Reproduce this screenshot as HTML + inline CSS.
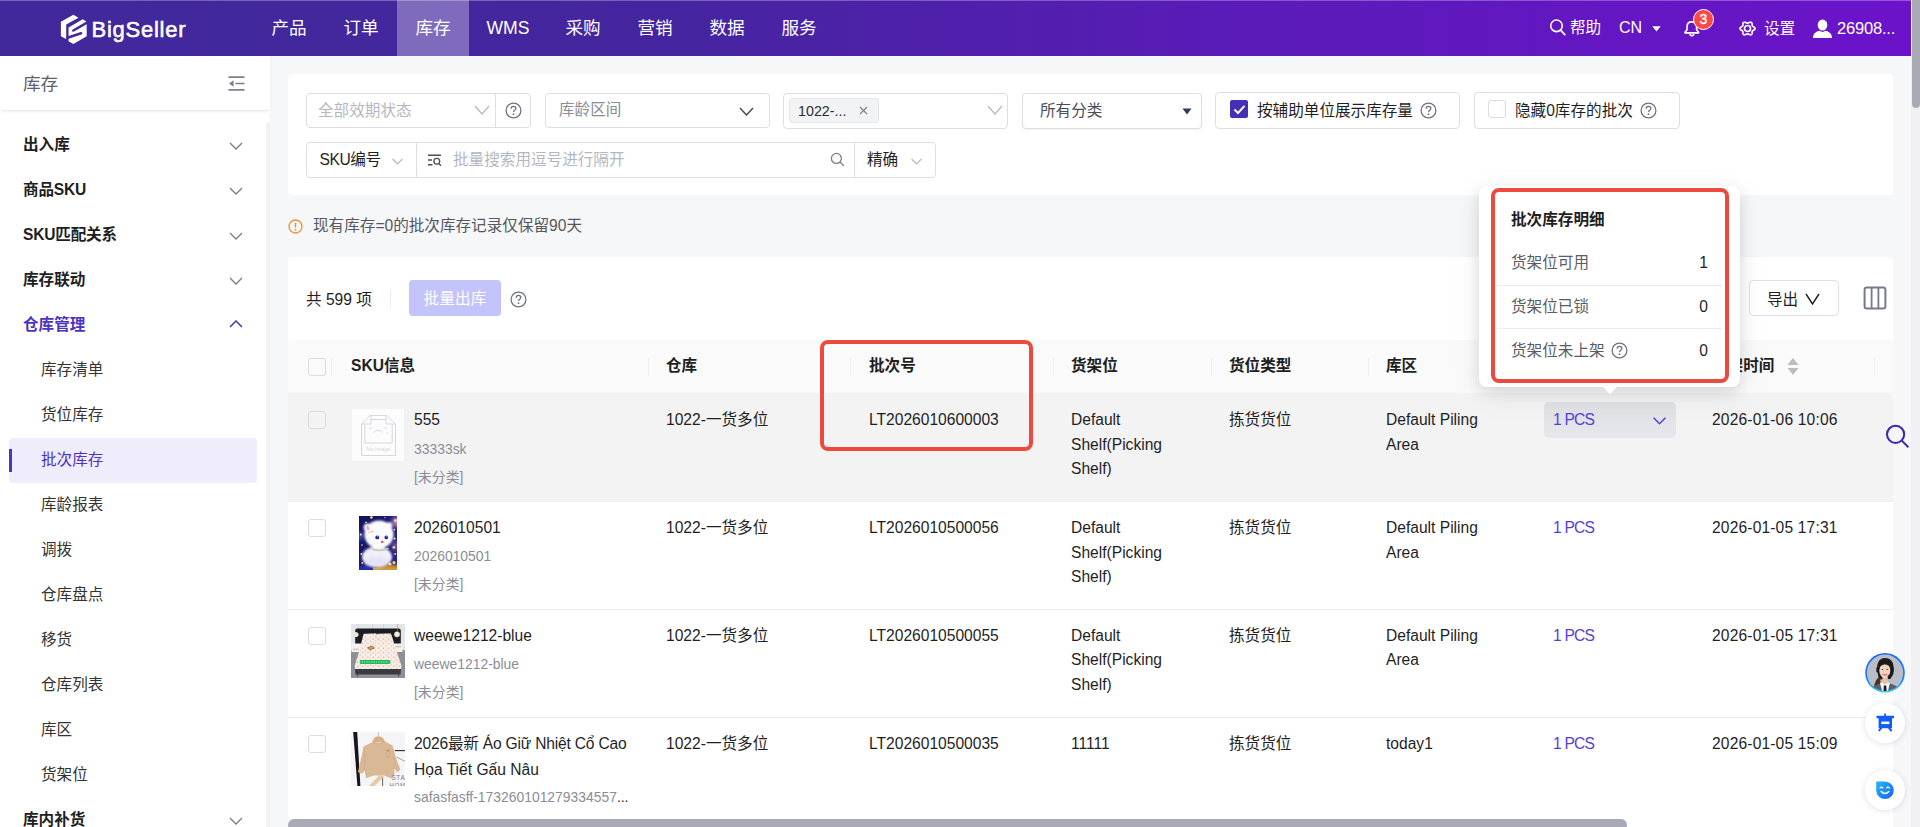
<!DOCTYPE html>
<html lang="zh-CN">
<head>
<meta charset="utf-8">
<title>批次库存 - BigSeller</title>
<style>
*{box-sizing:border-box;margin:0;padding:0}
html,body{width:1920px;height:827px;overflow:hidden;background:#f6f7f9}
body{font-family:"Liberation Sans","Noto Sans CJK SC",sans-serif;font-size:15.6px;color:#1f1f1f;position:relative}
.abs{position:absolute}
.t{position:absolute;white-space:nowrap;line-height:22px;font-size:15.6px}
svg{display:block}
/* header */
#hdr{position:absolute;left:0;top:0;width:1911px;height:56px;background:linear-gradient(90deg,#40299b 0%,#45259f 35%,#5a1bb8 65%,#6b13ca 100%);box-shadow:inset 0 1px 0 rgba(255,255,255,.28)}
#hdr .nav{position:absolute;top:0;height:56px;line-height:57px;font-size:17.6px;color:#fff;text-align:center;white-space:nowrap}
#hdr .nav.on{background:rgba(255,255,255,.32)}
#hdr .r{position:absolute;color:#fff;font-size:15.6px;line-height:20px;white-space:nowrap}
/* sidebar */
#side{position:absolute;left:0;top:56px;width:270px;height:771px;background:#fff}
#side .head{position:absolute;left:0;top:0;width:270px;height:55px;background:#fff;border-bottom:1px solid #ececf0;border-radius:0 0 4px 4px;box-shadow:0 1px 3px rgba(0,0,0,.06)}
#side .m{position:absolute;left:23px;font-weight:bold;font-size:15.6px;line-height:20px;color:#1f1f1f;white-space:nowrap}
#side .s{position:absolute;left:41px;font-size:15.6px;line-height:20px;color:#333;white-space:nowrap}
#side .chev{position:absolute;left:229px;width:14px;height:8px}
/* cards */
.card{position:absolute;background:#fff;border-radius:4px}
.box{position:absolute;border:1px solid #dcdee3;border-radius:4px;background:#fff;height:35px}
.ph{color:#b4b7bf}
.th{position:absolute;top:356px;font-weight:bold;font-size:15.6px;line-height:20px;white-space:nowrap;color:#1f1f1f}
.cb{position:absolute;width:18px;height:18px;border:1px solid #d9dce5;border-radius:3px;background:transparent}
.td{position:absolute;font-size:15.6px;line-height:24.6px;color:#1f1f1f;white-space:nowrap}
.sub{position:absolute;font-size:13.9px;line-height:20px;color:#8a8d96;white-space:nowrap}
.lnk{color:#5540d6;font-size:15.6px;letter-spacing:-.8px}
.sep{position:absolute;width:1px;height:18px;top:358px;background:#efeff2}
</style>
</head>
<body>

<!-- ================= HEADER ================= -->
<div id="hdr">
  <svg class="abs" style="left:60px;top:14px" width="28" height="32" viewBox="0 0 28 32">
    <g transform="translate(0.5,0.8) scale(0.078125) translate(-135,-125)">
      <path d="M300 125 L365 162 L208 250 L208 436 L140 400 L140 215 Z" fill="#fff"/>
      <path d="M420 182 L470 213 L470 400 L300 500 L238 464 L238 288 Z" fill="#fff"/>
      <path d="M480 222 L300 326" stroke="#41299b" stroke-width="33" stroke-linecap="round" fill="none"/>
      <path d="M225 418 L398 362" stroke="#41299b" stroke-width="33" stroke-linecap="round" fill="none"/>
    </g>
  </svg>
  <div class="abs" style="left:91.5px;top:13px;font-size:22px;line-height:34px;color:#fff;letter-spacing:.75px;white-space:nowrap;-webkit-text-stroke:.55px #fff">BigSeller</div>

  <div class="nav" style="left:253px;width:72px">产品</div>
  <div class="nav" style="left:325px;width:72px">订单</div>
  <div class="nav on" style="left:397px;width:72px">库存</div>
  <div class="nav" style="left:469px;width:78px">WMS</div>
  <div class="nav" style="left:547px;width:72px">采购</div>
  <div class="nav" style="left:619px;width:72px">营销</div>
  <div class="nav" style="left:691px;width:72px">数据</div>
  <div class="nav" style="left:763px;width:72px">服务</div>

  <svg class="abs" style="left:1549px;top:18px" width="17" height="18" viewBox="0 0 17 18"><circle cx="7.5" cy="7.8" r="5.8" fill="none" stroke="#fff" stroke-width="1.6"/><path d="M11.8 12.3 L15.8 16.6" stroke="#fff" stroke-width="1.7" stroke-linecap="round"/></svg>
  <div class="r" style="left:1570px;top:17.5px">帮助</div>
  <div class="r" style="left:1619px;top:18px;font-size:16px">CN</div>
  <svg class="abs" style="left:1652px;top:25.8px" width="9" height="6" viewBox="0 0 9 6"><path d="M0.3 0.3 H8.7 L4.5 5.6 Z" fill="#fff"/></svg>
  <svg class="abs" style="left:1683px;top:20px" width="18" height="18" viewBox="0 0 18 18"><path d="M8.8 1.9 C5.6 1.9 4 4.2 4 7 V9.8 L2 12.2 V12.9 H15.6 V12.2 L13.6 9.8 V7 C13.6 4.2 12 1.9 8.8 1.9 Z" fill="none" stroke="#fff" stroke-width="1.6" stroke-linejoin="round"/><path d="M6.9 14.6 Q8.8 17 10.7 14.6" fill="none" stroke="#fff" stroke-width="1.6" stroke-linecap="round"/></svg>
  <div class="abs" style="left:1693px;top:9px;width:21px;height:21px;border-radius:11px;background:#fa4a45;border:1px solid #fff;color:#fff;font-size:14px;line-height:19px;text-align:center;-webkit-text-stroke:.35px #fff">3</div>
  <svg class="abs" style="left:1739px;top:20.2px" width="17" height="17" viewBox="0 0 17 17"><path d="M8.50 3.24 L8.87 3.18 L9.27 3.02 L9.71 2.80 L10.20 2.55 L10.72 2.35 L11.26 2.23 L11.79 2.24 L12.25 2.39 L12.63 2.69 L12.90 3.11 L13.06 3.61 L13.13 4.15 L13.15 4.67 L13.16 5.14 L13.22 5.54 L13.35 5.87 L13.59 6.14 L13.93 6.39 L14.36 6.63 L14.83 6.91 L15.28 7.23 L15.66 7.61 L15.91 8.04 L16.00 8.50 L15.91 8.96 L15.66 9.39 L15.28 9.77 L14.83 10.09 L14.36 10.37 L13.93 10.61 L13.59 10.86 L13.35 11.13 L13.22 11.46 L13.16 11.86 L13.15 12.33 L13.13 12.85 L13.06 13.39 L12.90 13.89 L12.63 14.31 L12.25 14.61 L11.79 14.76 L11.26 14.77 L10.72 14.65 L10.20 14.45 L9.71 14.20 L9.27 13.98 L8.87 13.82 L8.50 13.76 L8.13 13.82 L7.73 13.98 L7.29 14.20 L6.80 14.45 L6.28 14.65 L5.74 14.77 L5.21 14.76 L4.75 14.61 L4.37 14.31 L4.10 13.89 L3.94 13.39 L3.87 12.85 L3.85 12.33 L3.84 11.86 L3.78 11.46 L3.65 11.13 L3.41 10.86 L3.07 10.61 L2.64 10.37 L2.17 10.09 L1.72 9.77 L1.34 9.39 L1.09 8.96 L1.00 8.50 L1.09 8.04 L1.34 7.61 L1.72 7.23 L2.17 6.91 L2.64 6.63 L3.07 6.39 L3.41 6.14 L3.65 5.87 L3.78 5.54 L3.84 5.14 L3.85 4.67 L3.87 4.15 L3.94 3.61 L4.10 3.11 L4.37 2.69 L4.75 2.39 L5.21 2.24 L5.74 2.23 L6.28 2.35 L6.80 2.55 L7.29 2.80 L7.73 3.02 L8.13 3.18 Z" fill="none" stroke="#fff" stroke-width="1.7" stroke-linejoin="round"/><circle cx="8.5" cy="8.5" r="3" fill="none" stroke="#fff" stroke-width="1.7"/></svg>
  <div class="r" style="left:1764px;top:19px">设置</div>
  <svg class="abs" style="left:1812px;top:18.2px" width="21" height="21" viewBox="0 0 21 21"><ellipse cx="10.5" cy="7" rx="4.8" ry="5.6" fill="#fff"/><path d="M1 20 C1 15 5 13.2 7.6 12.8 Q10.5 15 13.4 12.8 C16 13.2 20 15 20 20 Z" fill="#fff"/></svg>
  <div class="r" style="left:1837px;top:17.5px;font-size:16.5px;letter-spacing:-.2px">26908...</div>
</div>
<!-- page scrollbar -->
<div class="abs" style="left:1911px;top:0;width:9px;height:827px;background:#f1f1f4"></div>
<div class="abs" style="left:1912px;top:-4px;width:8px;height:112px;border-radius:4px;background:#a9abb4"></div>

<!-- ================= SIDEBAR ================= -->
<div id="side">
  <div class="abs" style="left:266px;top:66px;width:4px;height:705px;background:#f1f2f6;border-radius:3px 3px 0 0"></div>
  <div class="head">
    <div class="t" style="left:23px;top:17px;font-size:17.6px;color:#5f6168">库存</div>
    <svg class="abs" style="left:228px;top:20px" width="17" height="15" viewBox="0 0 17 15"><path d="M0.5 1.2 H16.5 M7.4 7.5 H16.5 M0.5 13.8 H16.5" stroke="#7b808c" stroke-width="1.7" fill="none"/><path d="M5.6 4.2 V10.8 L0.9 7.5 Z" fill="#7b808c"/></svg>
  </div>
  <div class="m" style="top:79px">出入库</div>
  <div class="m" style="top:124px;letter-spacing:-.2px">商品SKU</div>
  <div class="m" style="top:169px;letter-spacing:-.2px">SKU匹配关系</div>
  <div class="m" style="top:214px">库存联动</div>
  <div class="m" style="top:259px;color:#4b34c2">仓库管理</div>
  <svg class="chev" style="top:86px" viewBox="0 0 14 8"><path d="M1 1 L7 7 L13 1" fill="none" stroke="#7b7e87" stroke-width="1.4"/></svg>
  <svg class="chev" style="top:131px" viewBox="0 0 14 8"><path d="M1 1 L7 7 L13 1" fill="none" stroke="#7b7e87" stroke-width="1.4"/></svg>
  <svg class="chev" style="top:176px" viewBox="0 0 14 8"><path d="M1 1 L7 7 L13 1" fill="none" stroke="#7b7e87" stroke-width="1.4"/></svg>
  <svg class="chev" style="top:221px" viewBox="0 0 14 8"><path d="M1 1 L7 7 L13 1" fill="none" stroke="#7b7e87" stroke-width="1.4"/></svg>
  <svg class="chev" style="top:264px" viewBox="0 0 14 8"><path d="M1 7 L7 1 L13 7" fill="none" stroke="#4b34c2" stroke-width="1.5"/></svg>
  <div class="abs" style="left:9px;top:382px;width:248px;height:45px;border-radius:4px;background:#efedfc"></div>
  <div class="abs" style="left:9px;top:393px;width:3px;height:23px;background:#4b34c2"></div>
  <div class="s" style="top:304px">库存清单</div>
  <div class="s" style="top:349px">货位库存</div>
  <div class="s" style="top:394px;color:#4b34c2">批次库存</div>
  <div class="s" style="top:439px">库龄报表</div>
  <div class="s" style="top:484px">调拨</div>
  <div class="s" style="top:529px">仓库盘点</div>
  <div class="s" style="top:574px">移货</div>
  <div class="s" style="top:619px">仓库列表</div>
  <div class="s" style="top:664px">库区</div>
  <div class="s" style="top:709px">货架位</div>
  <div class="m" style="top:754px">库内补货</div>
  <svg class="chev" style="top:761px" viewBox="0 0 14 8"><path d="M1 1 L7 7 L13 1" fill="none" stroke="#7b7e87" stroke-width="1.4"/></svg>
</div>

<!-- ================= FILTER CARD ================= -->
<div class="card" style="left:288px;top:74px;width:1605px;height:121px"></div>
<div class="box" style="left:306px;top:93px;width:225px"></div>
<div class="abs" style="left:495px;top:93px;width:1px;height:35px;background:#dcdee3"></div>
<div class="t ph" style="left:318px;top:100px">全部效期状态</div>
<svg class="abs" style="left:474px;top:105px" width="16" height="10" viewBox="0 0 16 10"><path d="M1 1 L8 9 L15 1" fill="none" stroke="#b4b7bf" stroke-width="1.2"/></svg>
<svg class="abs" style="left:505px;top:102px" width="17" height="17" viewBox="0 0 17 17"><circle cx="8.5" cy="8.5" r="7.4" fill="none" stroke="#6d7180" stroke-width="1.25"/><path d="M6.1 6.8 C6.1 5.3 7.1 4.4 8.5 4.4 C9.9 4.4 10.9 5.3 10.9 6.6 C10.9 8.2 8.5 8.2 8.5 10" fill="none" stroke="#6d7180" stroke-width="1.25"/><circle cx="8.5" cy="12.2" r=".9" fill="#6d7180"/></svg>
<div class="box" style="left:545px;top:93px;width:225px"></div>
<div class="t" style="left:559px;top:99px;color:#8a8d96">库龄区间</div>
<svg class="abs" style="left:739px;top:107px" width="15" height="9" viewBox="0 0 15 9"><path d="M1 1 L7.5 8 L14 1" fill="none" stroke="#4a4d57" stroke-width="1.5"/></svg>
<div class="box" style="left:783px;top:93px;width:225px;height:36px"></div>
<div class="abs" style="left:789px;top:98px;width:90px;height:25px;border-radius:3px;background:#f2f3f5;border:1px solid #e6e7eb"></div>
<div class="t" style="left:798px;top:100px;font-size:14.3px;color:#2b2d33">1022-...</div>
<svg class="abs" style="left:859px;top:106px" width="9" height="9" viewBox="0 0 9 9"><path d="M1 1 L8 8 M8 1 L1 8" stroke="#7b7e87" stroke-width="1.1"/></svg>
<svg class="abs" style="left:987px;top:105px" width="16" height="10" viewBox="0 0 16 10"><path d="M1 1 L8 9 L15 1" fill="none" stroke="#b4b7bf" stroke-width="1.2"/></svg>
<div class="box" style="left:1022px;top:93px;width:180px;height:36px;box-shadow:0 1px 2px rgba(0,0,0,.05)"></div>
<div class="t" style="left:1040px;top:100px;color:#4a4d57">所有分类</div>
<svg class="abs" style="left:1182px;top:108px" width="10" height="7" viewBox="0 0 10 7"><path d="M0.5 0.5 H9.5 L5 6.5 Z" fill="#2f3a56"/></svg>
<div class="box" style="left:1215px;top:92px;width:245px;height:37px"></div>
<div class="abs" style="left:1230px;top:100px;width:18px;height:18px;border-radius:2px;background:#4330b4"></div>
<svg class="abs" style="left:1232.5px;top:103.5px" width="13" height="11" viewBox="0 0 13 11"><path d="M1.5 5.5 L5 9 L11.5 1.8" fill="none" stroke="#fff" stroke-width="1.9"/></svg>
<div class="t" style="left:1257px;top:100px">按辅助单位展示库存量</div>
<svg class="abs" style="left:1420px;top:102px" width="17" height="17" viewBox="0 0 17 17"><circle cx="8.5" cy="8.5" r="7.4" fill="none" stroke="#6d7180" stroke-width="1.25"/><path d="M6.1 6.8 C6.1 5.3 7.1 4.4 8.5 4.4 C9.9 4.4 10.9 5.3 10.9 6.6 C10.9 8.2 8.5 8.2 8.5 10" fill="none" stroke="#6d7180" stroke-width="1.25"/><circle cx="8.5" cy="12.2" r=".9" fill="#6d7180"/></svg>
<div class="box" style="left:1474px;top:92px;width:206px;height:37px"></div>
<div class="cb" style="left:1488px;top:100px"></div>
<div class="t" style="left:1515px;top:100px">隐藏0库存的批次</div>
<svg class="abs" style="left:1640px;top:102px" width="17" height="17" viewBox="0 0 17 17"><circle cx="8.5" cy="8.5" r="7.4" fill="none" stroke="#6d7180" stroke-width="1.25"/><path d="M6.1 6.8 C6.1 5.3 7.1 4.4 8.5 4.4 C9.9 4.4 10.9 5.3 10.9 6.6 C10.9 8.2 8.5 8.2 8.5 10" fill="none" stroke="#6d7180" stroke-width="1.25"/><circle cx="8.5" cy="12.2" r=".9" fill="#6d7180"/></svg>
<div class="box" style="left:306px;top:142px;width:630px;height:36px"></div>
<div class="abs" style="left:416px;top:143px;width:1px;height:34px;background:#dcdee3"></div>
<div class="abs" style="left:854px;top:143px;width:1px;height:34px;background:#dcdee3"></div>
<div class="t" style="left:319.5px;top:149px;letter-spacing:-.4px">SKU编号</div>
<svg class="abs" style="left:392px;top:157.8px" width="11" height="7" viewBox="0 0 11 7"><path d="M.6 1 L5.5 6 L10.4 1" fill="none" stroke="#b4b7c0" stroke-width="1.1"/></svg>
<svg class="abs" style="left:427px;top:153px" width="16" height="14" viewBox="0 0 16 14"><path d="M1 2.2 H14 M1 7 H5 M1 11.8 H5.5" stroke="#4a4d57" stroke-width="1.4" fill="none"/><circle cx="9.8" cy="8.3" r="2.9" fill="none" stroke="#4a4d57" stroke-width="1.3"/><path d="M12 10.6 L14 12.8" stroke="#4a4d57" stroke-width="1.3"/></svg>
<div class="t ph" style="left:453px;top:149px">批量搜索用逗号进行隔开</div>
<svg class="abs" style="left:830px;top:152px" width="15" height="15" viewBox="0 0 15 15"><circle cx="6.4" cy="6.4" r="5" fill="none" stroke="#7b7e87" stroke-width="1.3"/><path d="M10 10 L14 14" stroke="#7b7e87" stroke-width="1.3"/></svg>
<div class="t" style="left:867px;top:149px">精确</div>
<svg class="abs" style="left:911px;top:157.8px" width="11" height="7" viewBox="0 0 11 7"><path d="M.6 1 L5.5 6 L10.4 1" fill="none" stroke="#b4b7c0" stroke-width="1.1"/></svg>

<!-- notice -->
<svg class="abs" style="left:288px;top:219px" width="15" height="15" viewBox="0 0 15 15"><circle cx="7.5" cy="7.5" r="6.5" fill="none" stroke="#f08c2e" stroke-width="1.3"/><path d="M7.5 3.8 V8.6" stroke="#f08c2e" stroke-width="1.4"/><circle cx="7.5" cy="10.8" r=".9" fill="#f08c2e"/></svg>
<div class="t" style="left:313px;top:215px;color:#55585f">现有库存=0的批次库存记录仅保留90天</div>

<!-- ================= TABLE CARD ================= -->
<div class="card" style="left:288px;top:257px;width:1605px;height:580px"></div>
<div class="t" style="left:306px;top:289px">共 599 项</div>
<div class="abs" style="left:390px;top:290px;width:1px;height:17px;background:#ececef"></div>
<div class="abs" style="left:409px;top:280px;width:92px;height:36px;border-radius:4px;background:#c3c4fb;color:#fff;font-size:15.6px;line-height:38px;text-align:center;letter-spacing:.2px">批量出库</div>
<svg class="abs" style="left:510px;top:291px" width="17" height="17" viewBox="0 0 17 17"><circle cx="8.5" cy="8.5" r="7.4" fill="none" stroke="#6d7180" stroke-width="1.25"/><path d="M6.1 6.8 C6.1 5.3 7.1 4.4 8.5 4.4 C9.9 4.4 10.9 5.3 10.9 6.6 C10.9 8.2 8.5 8.2 8.5 10" fill="none" stroke="#6d7180" stroke-width="1.25"/><circle cx="8.5" cy="12.2" r=".9" fill="#6d7180"/></svg>
<div class="abs" style="left:1749px;top:280px;width:90px;height:36px;border:1px solid #e0e2e7;border-radius:4px;background:#fff"></div>
<div class="t" style="left:1767px;top:288.5px;letter-spacing:0">导出</div>
<svg class="abs" style="left:1805px;top:293px" width="15" height="12" viewBox="0 0 15 12"><path d="M1 1 L7.5 11 L14 1" fill="none" stroke="#1f1f1f" stroke-width="1.4"/></svg>
<svg class="abs" style="left:1863px;top:286px" width="24" height="24" viewBox="0 0 24 24"><rect x="1.6" y="1.6" width="20.8" height="20.8" rx="2.2" fill="none" stroke="#757a8c" stroke-width="2"/><path d="M8.6 1.5 V22.5 M15.4 1.5 V22.5" stroke="#757a8c" stroke-width="1.8"/></svg>

<!-- table header -->
<div class="abs" style="left:288px;top:339.5px;width:1605px;height:53.5px;background:#fafafb;border-radius:4px 4px 0 0"></div>
<div class="cb" style="left:307.5px;top:358px"></div>
<div class="th" style="left:351px">SKU信息</div>
<div class="th" style="left:666px">仓库</div>
<div class="th" style="left:869px">批次号</div>
<div class="th" style="left:1071px">货架位</div>
<div class="th" style="left:1229px">货位类型</div>
<div class="th" style="left:1386px">库区</div>
<div class="th" style="left:1553px">库存</div>
<div class="th" style="left:1712px">上架时间</div>
<svg class="abs" style="left:1786px;top:357px" width="14" height="19" viewBox="0 0 14 19"><path d="M7 1 L12.6 8 H1.4 Z M7 18 L12.6 11 H1.4 Z" fill="#b9bcc4"/></svg>
<div class="sep" style="left:331px"></div><div class="sep" style="left:648px"></div><div class="sep" style="left:850px"></div><div class="sep" style="left:1053px"></div><div class="sep" style="left:1211px"></div><div class="sep" style="left:1368px"></div><div class="sep" style="left:1535px"></div><div class="sep" style="left:1694px"></div><div class="sep" style="left:1874px"></div>
<!-- row 1 -->
<div class="abs" style="left:288px;top:393px;width:1605px;height:108px;background:#f3f3f4"></div>
<div class="cb" style="left:307.5px;top:411px"></div>
<div class="td" style="left:414px;top:408px">555</div>
<div class="sub" style="left:414px;top:439px">33333sk</div>
<div class="sub" style="left:414px;top:467px">[未分类]</div>
<div class="td" style="left:666px;top:408px">1022-一货多位</div>
<div class="td" style="left:869px;top:408px">LT2026010600003</div>
<div class="td" style="left:1071px;top:408px">Default<br>Shelf(Picking<br>Shelf)</div>
<div class="td" style="left:1229px;top:408px">拣货货位</div>
<div class="td" style="left:1386px;top:408px">Default Piling<br>Area</div>
<div class="abs" style="left:1544px;top:402px;width:132px;height:36px;border-radius:5px;background:linear-gradient(#dfe0e4,#e6e7ea)"></div>
<svg class="abs" style="left:1653px;top:417px" width="13" height="8" viewBox="0 0 13 8"><path d="M.6 .8 L6.5 6.8 L12.4 .8" fill="none" stroke="#5540d6" stroke-width="1.5"/></svg>
<div class="td lnk" style="left:1553px;top:408px">1 PCS</div>
<div class="td" style="left:1712px;top:408px;letter-spacing:.15px">2026-01-06 10:06</div>
<!-- row 2 -->
<div class="abs" style="left:288px;top:501px;width:1605px;height:108px;background:#fff"></div>
<div class="abs" style="left:288px;top:501px;width:1605px;height:1px;background:#ededf0"></div>
<div class="cb" style="left:307.5px;top:519px"></div>
<div class="td" style="left:414px;top:516px">2026010501</div>
<div class="sub" style="left:414px;top:546px">2026010501</div>
<div class="sub" style="left:414px;top:574px">[未分类]</div>
<div class="td" style="left:666px;top:516px">1022-一货多位</div>
<div class="td" style="left:869px;top:516px">LT2026010500056</div>
<div class="td" style="left:1071px;top:516px">Default<br>Shelf(Picking<br>Shelf)</div>
<div class="td" style="left:1229px;top:516px">拣货货位</div>
<div class="td" style="left:1386px;top:516px">Default Piling<br>Area</div>
<div class="td lnk" style="left:1553px;top:516px">1 PCS</div>
<div class="td" style="left:1712px;top:516px;letter-spacing:.15px">2026-01-05 17:31</div>
<!-- row 3 -->
<div class="abs" style="left:288px;top:609px;width:1605px;height:108px;background:#fff"></div>
<div class="abs" style="left:288px;top:609px;width:1605px;height:1px;background:#ededf0"></div>
<div class="cb" style="left:307.5px;top:627px"></div>
<div class="td" style="left:414px;top:623.8px">weewe1212-blue</div>
<div class="sub" style="left:414px;top:653.8px">weewe1212-blue</div>
<div class="sub" style="left:414px;top:681.8px">[未分类]</div>
<div class="td" style="left:666px;top:623.8px">1022-一货多位</div>
<div class="td" style="left:869px;top:623.8px">LT2026010500055</div>
<div class="td" style="left:1071px;top:623.8px">Default<br>Shelf(Picking<br>Shelf)</div>
<div class="td" style="left:1229px;top:623.8px">拣货货位</div>
<div class="td" style="left:1386px;top:623.8px">Default Piling<br>Area</div>
<div class="td lnk" style="left:1553px;top:623.8px">1 PCS</div>
<div class="td" style="left:1712px;top:623.8px;letter-spacing:.15px">2026-01-05 17:31</div>
<!-- row 4 -->
<div class="abs" style="left:288px;top:717px;width:1605px;height:108px;background:#fff"></div>
<div class="abs" style="left:288px;top:717px;width:1605px;height:1px;background:#ededf0"></div>
<div class="cb" style="left:307.5px;top:735px"></div>
<div class="td" style="left:414px;top:731.4px;line-height:25.2px"><span style="letter-spacing:-.2px">2026最新 Áo Giữ Nhiệt Cổ Cao</span><br>Họa Tiết Gấu Nâu</div>
<div class="sub" style="left:414px;top:787.4px">safasfasff-173260101279334557<span style="color:#1f1f1f">...</span></div>
<div class="td" style="left:666px;top:731.6px">1022-一货多位</div>
<div class="td" style="left:869px;top:731.6px">LT2026010500035</div>
<div class="td" style="left:1071px;top:731.6px">11111</div>
<div class="td" style="left:1229px;top:731.6px">拣货货位</div>
<div class="td" style="left:1386px;top:731.6px">today1</div>
<div class="td lnk" style="left:1553px;top:731.6px">1 PCS</div>
<div class="td" style="left:1712px;top:731.6px;letter-spacing:.15px">2026-01-05 15:09</div>

<!-- horizontal scrollbar -->
<div class="abs" style="left:288px;top:819px;width:1339px;height:12px;border-radius:6px;background:#a8abb5"></div>

<!-- ================= PRODUCT IMAGES ================= -->
<div class="abs" style="left:352px;top:409px;width:52px;height:52px;background:#fcfcfd"></div>
<svg class="abs" style="left:352px;top:409px" width="52" height="52" viewBox="0 0 52 52">
  <path d="M9.5 15 L18 6.5 H35 L43.5 15 V46.5 H9.5 Z" fill="none" stroke="#d6d7e2" stroke-width="1"/>
  <path d="M9.5 15 H19 V6.5 M43.5 15 H34 V6.5 M19 10.5 H34 M12.8 15 V34 H40.2 V15" fill="none" stroke="#d6d7e2" stroke-width="1"/>
  <path d="M21.5 23.5 Q26 19 30.5 23.5" fill="none" stroke="#d6d7e2" stroke-width="1"/>
  <circle cx="18.2" cy="19.3" r=".9" fill="#d6d7e2"/><circle cx="33.8" cy="19.3" r=".9" fill="#d6d7e2"/><circle cx="35.2" cy="24.3" r=".8" fill="#d6d7e2"/>
  <text x="26.5" y="42.2" font-family="Liberation Sans, sans-serif" font-size="5.6" fill="#d6d7e2" text-anchor="middle">No Image</text>
</svg>

<svg class="abs" style="left:359px;top:516px" width="38" height="54" viewBox="0 0 38 54">
  <defs>
    <filter id="fz" x="-20%" y="-20%" width="140%" height="140%"><feGaussianBlur stdDeviation="1.2"/></filter>
    <filter id="fz2" x="-30%" y="-30%" width="160%" height="160%"><feGaussianBlur stdDeviation=".55"/></filter>
    <filter id="fz3" x="-30%" y="-30%" width="160%" height="160%"><feGaussianBlur stdDeviation="2.2"/></filter>
    <linearGradient id="nb" x1="0" y1="0" x2="1" y2=".6"><stop offset="0" stop-color="#12125a"/><stop offset=".55" stop-color="#1a1a72"/><stop offset="1" stop-color="#2a2280"/></linearGradient>
  </defs>
  <rect width="38" height="54" fill="url(#nb)"/>
  <g filter="url(#fz3)"><circle cx="38" cy="6" r="5" fill="#c98ac0"/><circle cx="37" cy="30" r="4" fill="#7a5aa8"/><circle cx="1" cy="20" r="3.4" fill="#4a5ad0"/><ellipse cx="30" cy="52" rx="12" ry="3.6" fill="#d9a032"/><ellipse cx="6" cy="53" rx="8" ry="2.4" fill="#2c3cc0"/></g>
  <rect x="14" y="51.6" width="24" height="2.4" fill="#d09a30" filter="url(#fz2)"/>
  <g fill="#f6d488" filter="url(#fz2)"><circle cx="36.4" cy="4.6" r="1.5"/><circle cx="35.4" cy="13.6" r=".9"/><circle cx="35.6" cy="22.6" r="1.1"/><circle cx="34.8" cy="31.4" r="1.3"/><circle cx="36.2" cy="38" r="1"/><circle cx="35" cy="46.6" r="1.5"/><circle cx="1.8" cy="18.6" r="1.1"/><circle cx="3" cy="29" r=".8"/><circle cx="2.4" cy="38" r="1"/><circle cx="12.4" cy="1.4" r="1.3"/><circle cx="7" cy="6.4" r=".8"/><circle cx="31" cy="48" r="1.6"/><circle cx="3.2" cy="47" r=".9"/><circle cx="26" cy="1.6" r=".7"/></g>
  <g filter="url(#fz)"><ellipse cx="18" cy="41" rx="15" ry="10.6" fill="#efeefa"/><ellipse cx="17" cy="46" rx="12" ry="5" fill="#e4e3f6"/><ellipse cx="20" cy="18.6" rx="14.6" ry="14" fill="#fbfbff"/><circle cx="8.6" cy="11.6" r="4" fill="#fbfbff"/><circle cx="30" cy="9.6" r="3.4" fill="#fbfbff"/></g>
  <ellipse cx="8.9" cy="12.2" rx="1.4" ry="2.4" fill="#f3a3bd" filter="url(#fz2)" transform="rotate(-18 8.9 12.2)"/>
  <ellipse cx="18.3" cy="21.4" rx="2" ry="1.9" fill="#1b2a80"/><ellipse cx="27.3" cy="21.4" rx="1.8" ry="1.9" fill="#1b2a80"/>
  <circle cx="18.9" cy="20.8" r=".5" fill="#fff"/><circle cx="27.8" cy="20.8" r=".5" fill="#fff"/>
  <ellipse cx="23.2" cy="26" rx="1.5" ry="1" fill="#e2456c"/><circle cx="23.2" cy="23.8" r=".5" fill="#e58a8a"/>
  <path d="M12 32.6 Q20 36.4 29.6 32.4" stroke="#cfc6b2" stroke-width="1.7" fill="none" filter="url(#fz2)"/>
  <path d="M9.4 16.8 L15.4 15" stroke="#f2c680" stroke-width="1.2" filter="url(#fz2)"/>
</svg>

<svg class="abs" style="left:351px;top:624px" width="54" height="54" viewBox="0 0 54 54">
  <defs><filter id="fb" x="-10%" y="-10%" width="120%" height="120%"><feGaussianBlur stdDeviation=".45"/></filter>
  <pattern id="dots" width="5.2" height="4.6" patternUnits="userSpaceOnUse"><rect width="5.2" height="4.6" fill="#f6f1ea"/><circle cx="1.3" cy="1.2" r=".75" fill="#ee9a8a"/><circle cx="3.9" cy="3.4" r=".7" fill="#f1aea0"/><circle cx="3.6" cy=".8" r=".45" fill="#d9d3b0"/></pattern></defs>
  <rect width="54" height="54" fill="#e4e5e8"/>
  <rect x="0" y="26" width="54" height="28" fill="#8f9096"/>
  <path d="M7 0 V26 M21.5 0 V6 M32.5 0 V6 M47 0 V10" stroke="#cfd0d4" stroke-width=".8"/>
  <g filter="url(#fb)">
  <rect x="4.2" y="4.6" width="45.6" height="22" rx="2.2" fill="#1d1e23"/>
  <rect x="0.5" y="19.5" width="9.5" height="8.5" fill="#f1f1f1"/><rect x="2.5" y="24.8" width="5" height=".8" fill="#c9a35a"/>
  <rect x="43" y="19.5" width="8.5" height="8.5" fill="#f1f1f1"/><rect x="44.5" y="22.4" width="5.5" height=".8" fill="#c9a35a"/>
  <ellipse cx="4.2" cy="10.5" rx="3.4" ry="2.6" fill="#e9e6dd"/>
  <circle cx="46" cy="10.3" r="2.9" fill="#f4f2e6" stroke="#7a6a3a" stroke-width=".4"/>
  <path d="M46.6 0 V7.4" stroke="#b89a4a" stroke-width=".5"/>
  <path d="M12.4 10.4 L40.4 10.4 Q45 26 50.4 41.4 L50.2 45 L4 45 L3.8 41.4 Q9 26 12.4 10.4 Z" fill="url(#dots)"/><path d="M3.8 41.4 L50.4 41.4" stroke="#e6dfd6" stroke-width=".5"/>
  <path d="M12.8 10 L25 9.6 L26 16.6 L14.8 17.4 Z" fill="url(#dots)" stroke="#ded6cb" stroke-width=".4"/>
  <path d="M25.6 10 L39.6 9.6 L39 17.2 L27.6 16.6 Z" fill="url(#dots)" stroke="#ded6cb" stroke-width=".4"/>
  <path d="M4 45 H50 L49.6 50.6 H4.4 Z" fill="#393a40"/>
  <path d="M6.4 50.6 V52.4 M47.6 50.6 V52.4" stroke="#2a2b30" stroke-width=".9"/>
  <path d="M16.6 23.6 L21.4 22 L23.6 24 L18.8 26 Z" fill="#d9a03c" stroke="#3a3a3a" stroke-width=".5"/>
  </g>
  <rect x="8.8" y="36" width="30.6" height="3.9" rx="1.2" fill="#23b95b"/>
  <path d="M10.5 38 H37.6" stroke="#a6e6bf" stroke-width="1.1" stroke-dasharray="1.4 1"/>
</svg>

<svg class="abs" style="left:351px;top:732px" width="54" height="54" viewBox="0 0 54 54">
  <defs><filter id="fs" x="-10%" y="-10%" width="120%" height="120%"><feGaussianBlur stdDeviation=".4"/></filter></defs>
  <rect width="54" height="54" fill="#f5f5f7"/>
  <g filter="url(#fs)">
  <path d="M2.2 0 H6.2 L9.4 54 H6.4 Z" fill="#17171a"/>
  <path d="M44 18.6 H54" stroke="#2a2a2e" stroke-width="1.1"/>
  <path d="M45.4 25 L54 29.4" stroke="#55555a" stroke-width=".5"/>
  <path d="M31.6 44 V54" stroke="#2a2a2e" stroke-width=".7"/>
  <path d="M27.4 0 V4.6" stroke="#8a8a8e" stroke-width=".5"/>
  <path d="M18 54 L28.4 43 L33 44.6 L23.4 54 Z" fill="#e9c9a2"/>
  <path d="M22 10.6 Q21.4 4.8 27.4 4.2 Q33.8 4.8 33.2 10.6 Z" fill="#d8b083"/>
  <path d="M21.4 8.6 Q27.4 14 34.2 8.2 L34.6 13.6 Q27.6 16.6 21 13.6 Z" fill="#d4b08a"/>
  <path d="M20.6 10.4 Q27.6 15.2 35 10 L41.6 13.6 L43.6 22 L49.4 37.6 L46.2 40.6 L43.4 36.6 L43.4 42.4 L40.4 46.4 L33 43.6 L23 43.4 L15 46.2 L13.6 38.6 L11 41.8 L7 40 L10.6 24 L12.6 14.6 Z" fill="#d9b995"/>
  <path d="M13.4 16 L13.8 38.4 M42.8 17 L43.4 36.6" stroke="#c7a480" stroke-width=".6" fill="none"/>
  <rect x="35.2" y="19.4" width="3.6" height="6" rx=".6" fill="none" stroke="#c09c78" stroke-width=".5"/>
  <path d="M35.4 19 L37 17 L38.8 19 Z" fill="#b98f6a"/>
  </g>
  <text x="40.4" y="47.6" font-family="Liberation Sans, sans-serif" font-size="6.4" fill="#7b7b80" letter-spacing=".7" textLength="14" lengthAdjust="spacingAndGlyphs">STA</text>
  <text x="38.6" y="55.6" font-family="Liberation Sans, sans-serif" font-size="6.4" fill="#7b7b80" letter-spacing=".7" textLength="16" lengthAdjust="spacingAndGlyphs">HOM</text>
</svg>

<!-- ================= RED HIGHLIGHT + POPOVER ================= -->
<div class="abs" style="left:820px;top:340px;width:213px;height:111px;border:4px solid #ec4a3f;border-radius:8px"></div>

<div class="abs" style="left:1479px;top:186px;width:261px;height:201px;background:#fff;border-radius:8px;box-shadow:0 4px 14px rgba(0,0,0,.10),0 8px 30px rgba(0,0,0,.08)"></div>
<svg class="abs" style="left:1602.5px;top:386.5px" width="14" height="8" viewBox="0 0 14 8"><path d="M0 0 H14 L7.6 6.6 Q7 7.2 6.4 6.6 Z" fill="#fff"/></svg>
<div class="abs" style="left:1491px;top:188px;width:238px;height:195px;border:4px solid #ec4a3f;border-radius:8px"></div>
<div class="t" style="left:1511px;top:209px;font-weight:bold">批次库存明细</div>
<div class="t" style="left:1511px;top:252px;color:#5a5d66">货架位可用</div>
<div class="t" style="left:1648px;top:252px;width:60px;text-align:right">1</div>
<div class="abs" style="left:1497px;top:285px;width:225px;height:1px;background:#ececef"></div>
<div class="t" style="left:1511px;top:296px;color:#5a5d66">货架位已锁</div>
<div class="t" style="left:1648px;top:296px;width:60px;text-align:right">0</div>
<div class="abs" style="left:1497px;top:328px;width:225px;height:1px;background:#ececef"></div>
<div class="t" style="left:1511px;top:340px;color:#5a5d66">货架位未上架</div>
<svg class="abs" style="left:1611px;top:342px" width="17" height="17" viewBox="0 0 17 17"><circle cx="8.5" cy="8.5" r="7.4" fill="none" stroke="#6d7180" stroke-width="1.25"/><path d="M6.1 6.8 C6.1 5.3 7.1 4.4 8.5 4.4 C9.9 4.4 10.9 5.3 10.9 6.6 C10.9 8.2 8.5 8.2 8.5 10" fill="none" stroke="#6d7180" stroke-width="1.25"/><circle cx="8.5" cy="12.2" r=".9" fill="#6d7180"/></svg>
<div class="t" style="left:1648px;top:340px;width:60px;text-align:right">0</div>

<!-- ================= FLOATING BUTTONS ================= -->
<svg class="abs" style="left:1884px;top:423px" width="28" height="28" viewBox="0 0 28 28"><circle cx="11.6" cy="11.3" r="8.6" fill="none" stroke="#3b22b0" stroke-width="2"/><path d="M17.8 17.6 L24.4 24.2" stroke="#3b22b0" stroke-width="2"/></svg>

<svg class="abs" style="left:1864px;top:652px" width="42" height="42" viewBox="0 0 42 42">
  <defs><clipPath id="av"><circle cx="21" cy="20.8" r="18.2"/></clipPath>
  <linearGradient id="avb" x1="0" y1="0" x2="0" y2="1"><stop offset="0" stop-color="#1763f5"/><stop offset=".65" stop-color="#1a7cff"/><stop offset="1" stop-color="#2fd6f7"/></linearGradient>
  <filter id="fa" x="-10%" y="-10%" width="120%" height="120%"><feGaussianBlur stdDeviation=".5"/></filter></defs>
  <circle cx="21" cy="20.8" r="19.8" fill="url(#avb)"/>
  <g clip-path="url(#av)"><rect width="42" height="42" fill="#b9bdc6"/>
   <g filter="url(#fa)">
    <path d="M13.4 19 Q12 6.6 21 6 Q30 6 29.6 17.6 L29.4 22 L26.4 27 L15.4 27.4 Q13.8 24 13.4 19 Z" fill="#231c1b"/>
    <path d="M15.4 24.6 Q11.6 27.6 10.4 32.4 Q9.8 36 11.6 39 L15.6 38 L16.6 30 Z" fill="#4a3026"/>
    <path d="M4 42 L6.6 35.4 L15.4 31.4 L21 37 L26.6 31.4 L35.4 35.4 L38 42 Z" fill="#5c5f68"/>
    <path d="M16 31 L20.8 29.4 L25.8 31 L23.6 41 L18.6 41 Z" fill="#f4f4f6"/>
    <path d="M19.8 33.4 H22.2 L22.8 41 H19.4 Z" fill="#1f1f24"/>
    <path d="M18.4 25 H23.8 V30.4 L21 32.6 L18.4 30.4 Z" fill="#e7c0a8"/>
    <ellipse cx="20.8" cy="18.4" rx="5.5" ry="7.6" fill="#f0d2c0"/>
    <path d="M15 16.4 Q15.4 9.4 21.4 9.6 Q26.8 10 26.8 16.6 Q24.4 12 20 12.6 Q16.4 13.2 15 16.4 Z" fill="#231c1b"/>
    <path d="M18.4 22.2 Q20.8 24.4 23.2 22.2 Q20.8 23.2 18.4 22.2 Z" fill="#d05468" stroke="#d05468" stroke-width=".5"/>
    <ellipse cx="18.4" cy="17.4" rx=".8" ry=".5" fill="#3a2a26"/><ellipse cx="23.2" cy="17.4" rx=".8" ry=".5" fill="#3a2a26"/>
    <path d="M13.8 13.6 Q20.8 4.4 28.4 13.4" stroke="#17171b" stroke-width="1.1" fill="none"/>
    <rect x="12.4" y="15" width="2.6" height="5.6" rx="1.2" fill="#17171b"/><rect x="27.4" y="15" width="2.2" height="5.4" rx="1.1" fill="#17171b"/>
    <path d="M28.4 20 Q28 24 23.6 24" stroke="#17171b" stroke-width=".9" fill="none"/>
   </g></g>
</svg>
<div class="abs" style="left:1865px;top:703px;width:40px;height:40px;border-radius:20px;background:#fff;box-shadow:0 1px 6px rgba(40,50,90,.14)"></div>
<svg class="abs" style="left:1875px;top:713px" width="20" height="20" viewBox="0 0 20 20"><rect x="9.2" y=".4" width="1.7" height="2.6" fill="#0f5cfa"/><rect x="1.5" y="2.7" width="17.5" height="2.6" rx=".4" fill="#0f5cfa"/><rect x="3.6" y="5" width="13.4" height="10.2" fill="#0f5cfa"/><rect x="6.2" y="8.6" width="8.2" height="2.5" fill="#fff"/><path d="M6.4 14.6 L3.8 18 M13.8 14.6 L16.6 18" stroke="#0f5cfa" stroke-width="2"/></svg>
<div class="abs" style="left:1865px;top:770px;width:40px;height:40px;border-radius:20px;background:#fff;box-shadow:0 1px 6px rgba(40,50,90,.14)"></div>
<svg class="abs" style="left:1875px;top:780px" width="20" height="20" viewBox="0 0 20 20"><defs><linearGradient id="dg" x1="0" y1="0" x2="1" y2="1"><stop offset="0" stop-color="#27b6f6"/><stop offset="1" stop-color="#1763f2"/></linearGradient></defs><path d="M1.2 1.4 H10 A8.8 8.8 0 1 1 1.2 10.2 Z" fill="url(#dg)"/><path d="M6.2 11.6 Q10 15.6 13.8 11.6" fill="none" stroke="#fff" stroke-width="1.5" stroke-linecap="round"/><path d="M5 8 Q6.4 6.2 7.8 8 M11.6 8 Q13 6.2 14.4 8" fill="none" stroke="#fff" stroke-width="1.2" stroke-linecap="round"/></svg>

</body>
</html>
